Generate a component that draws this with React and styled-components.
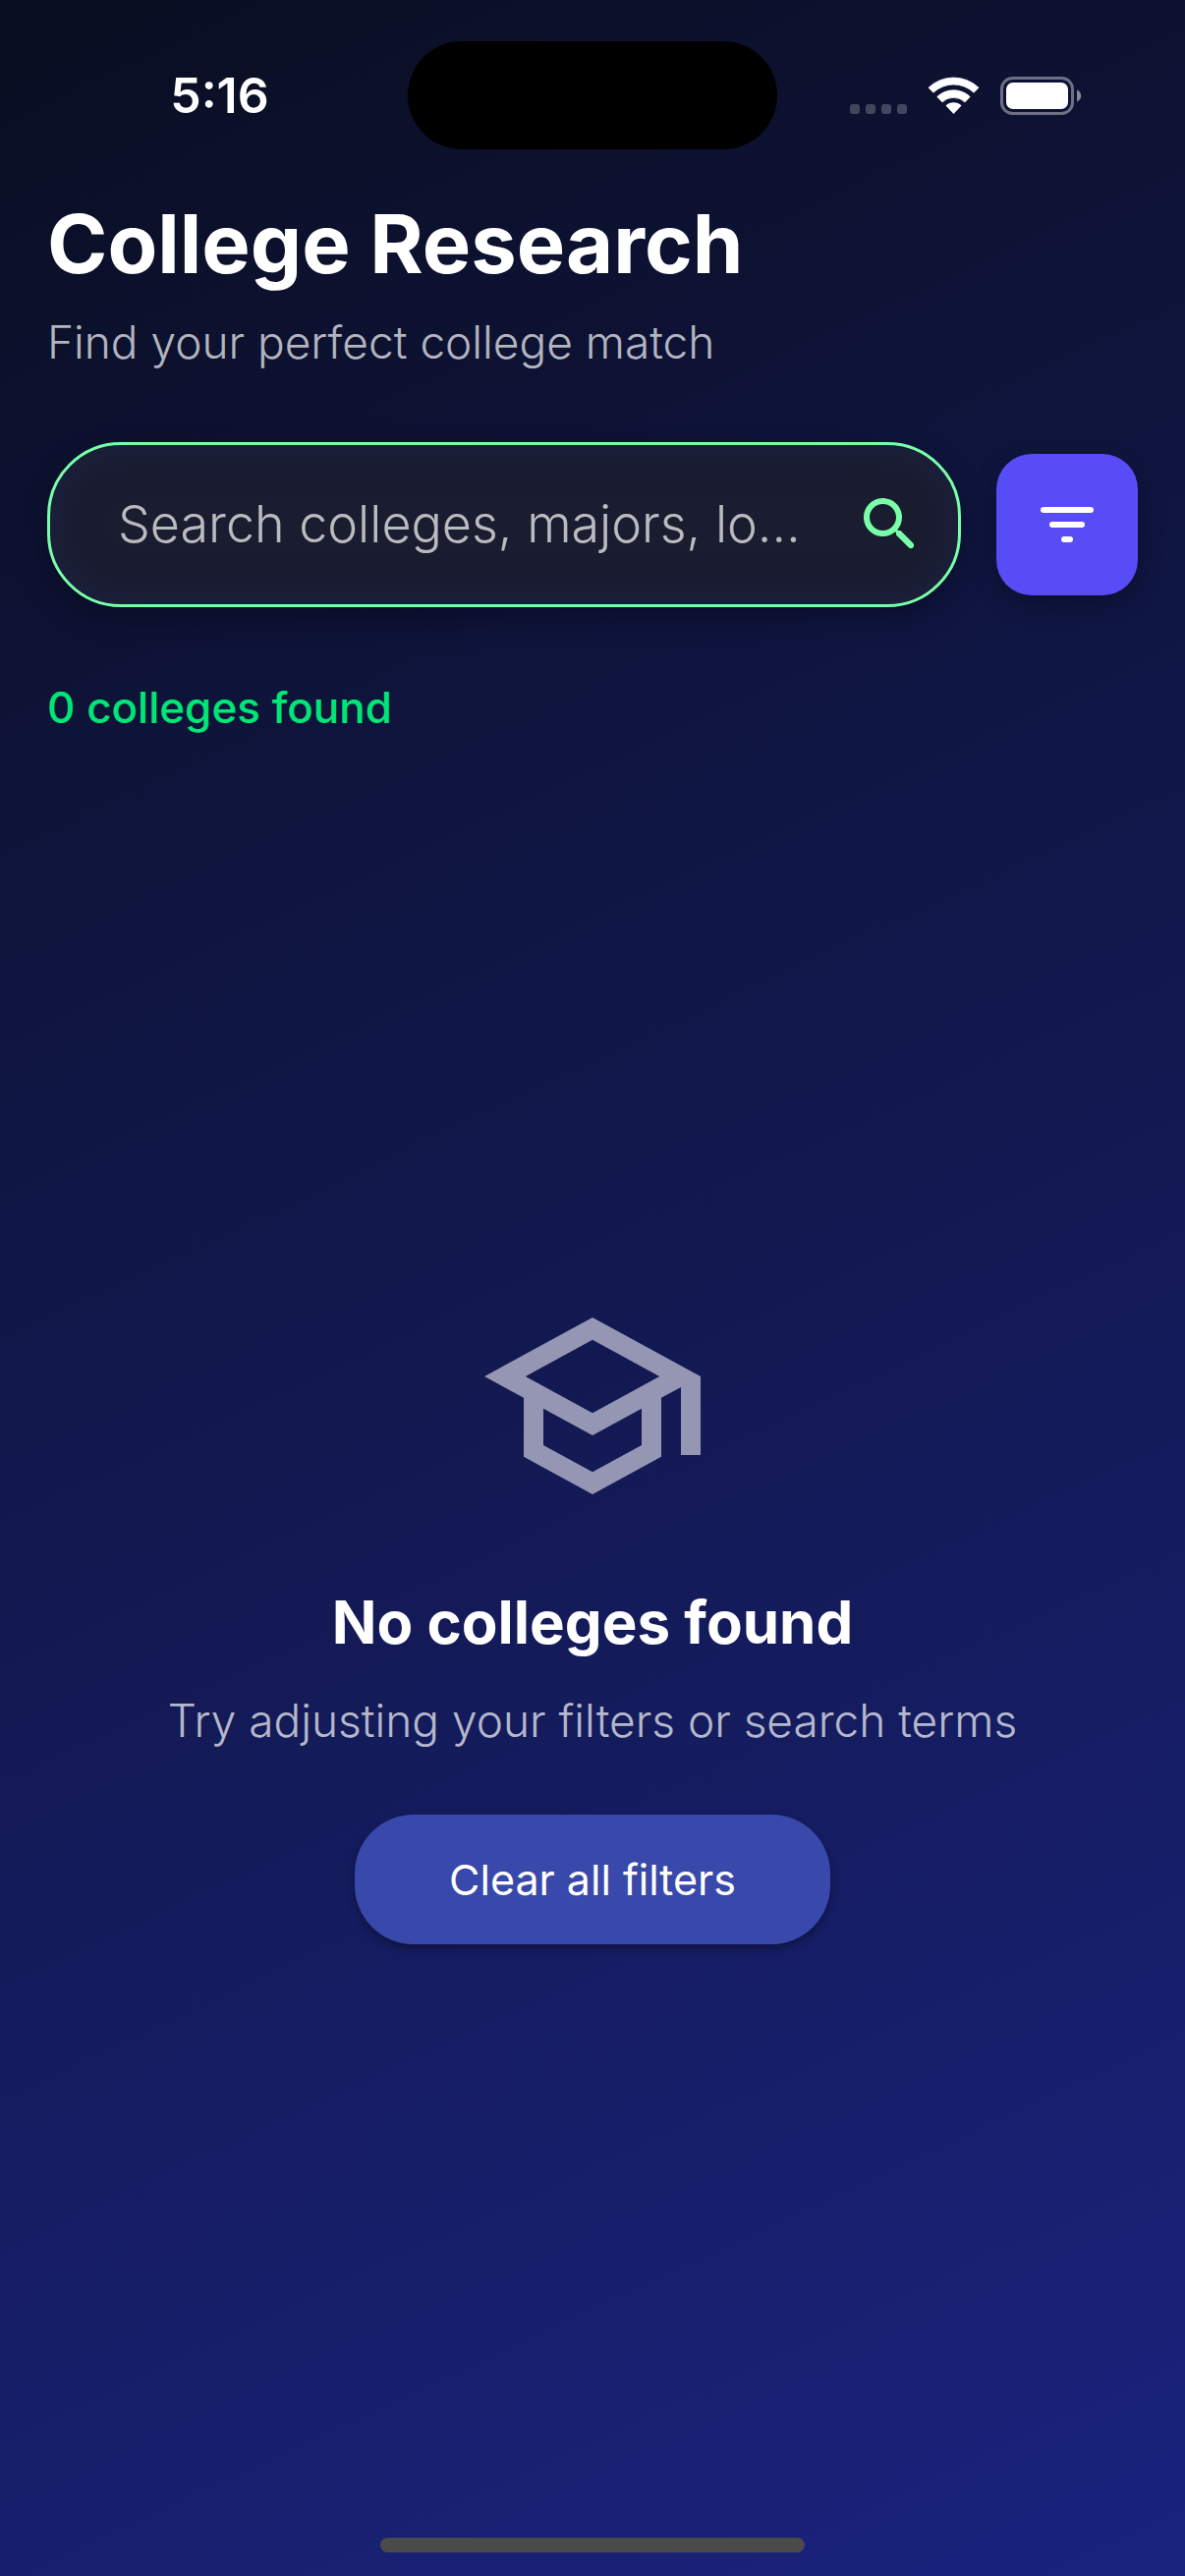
import React, { useState } from 'react';
import styled, { createGlobalStyle } from 'styled-components';
import { MdOutlineSchool } from 'react-icons/md';

const GlobalStyle = createGlobalStyle`
  *, *::before, *::after { box-sizing: border-box; }
  body {
    margin: 0;
    background: #0a0e21;
    color: #ffffff;
    font-family: Inter, "Liberation Sans", sans-serif;
  }
  h1, h2, p { margin: 0; }
  button, input { font: inherit; color: inherit; }
`;

const Screen = styled.div`
  display: flex;
  flex-direction: column;
  min-height: 100vh;
  background: linear-gradient(155deg, #0a0e21 0%, #1a237e 100%);
`;

const StatusBar = styled.header`
  display: grid;
  grid-template-columns: 1fr 376px 1fr;
  align-items: center;
  justify-items: center;
  padding: 42px 32px 34px;
`;

const Clock = styled.time`
  font-size: 50px;
  font-weight: 600;
  line-height: 60px;
`;

const Island = styled.div`
  width: 100%;
  height: 110px;
  border-radius: 55px;
  background: #000000;
`;

const StatusSvg = styled.svg`
  width: 236px;
  height: 38px;
  overflow: visible;
`;

const Content = styled.main`
  flex: 1;
  display: flex;
  flex-direction: column;
  padding: 10px 48px 0;
`;

const Title = styled.h1`
  font-size: 83px;
  font-weight: 700;
  line-height: 104px;
`;

const Caption = styled.p`
  font-size: 46px;
  font-weight: 300;
  line-height: 56px;
  color: rgba(255, 255, 255, 0.7);
`;

const Heading = styled.div`
  display: flex;
  flex-direction: column;
  gap: 20px;
`;

const SearchRow = styled.form`
  display: flex;
  align-items: center;
  gap: 36px;
  margin-top: 74px;
`;

const SearchBox = styled.label`
  flex: 1;
  min-width: 0;
  height: 168px;
  display: flex;
  align-items: center;
  gap: 28px;
  padding: 0 33px 0 69px;
  border: 3px solid #78ffa8;
  border-radius: 75px;
  background: #1a1c2f;
  box-shadow: 0 12px 30px rgba(0, 0, 0, 0.3), inset 0 0 45px rgba(30, 40, 86, 0.5);
`;

const SearchInput = styled.input`
  flex: 1;
  min-width: 0;
  padding: 0;
  border: 0;
  outline: 0;
  background: transparent;
  font-size: 52px;
  font-weight: 300;
  line-height: 64px;
  text-overflow: ellipsis;

  &::placeholder {
    color: rgba(255, 255, 255, 0.7);
    opacity: 1;
  }
`;

const Icon = styled.svg`
  flex: none;
  width: 72px;
  height: 72px;
  fill: ${(p) => p.$color};
`;

const FilterButton = styled.button`
  flex: none;
  width: 144px;
  height: 144px;
  display: grid;
  place-items: center;
  padding: 0;
  border: 0;
  border-radius: 36px;
  background: #584cf6;
  box-shadow: 0 9px 24px rgba(0, 0, 0, 0.3);
`;

const ResultCount = styled.p`
  margin-top: 74px;
  font-size: 44px;
  font-weight: 500;
  line-height: 56px;
  color: #00e676;
`;

const EmptyState = styled.section`
  flex: 1;
  display: flex;
  flex-direction: column;
  align-items: center;
  justify-content: center;
  text-align: center;
`;

const SchoolIcon = styled(MdOutlineSchool)`
  width: 240px;
  height: 240px;
  color: #9496b3;
`;

const EmptyTitle = styled.h2`
  margin: 64px 0 36px;
  font-size: 60px;
  font-weight: 700;
  line-height: 72px;
`;

const ClearButton = styled.button`
  margin-top: 68px;
  padding: 38px 96px;
  border: 0;
  border-radius: 60px;
  background: #3949ab;
  font-size: 43px;
  font-weight: 400;
  line-height: 56px;
  box-shadow: 0 4px 9px rgba(0, 0, 0, 0.35);
`;

const HomeArea = styled.footer`
  display: flex;
  align-items: flex-end;
  justify-content: center;
  height: 80px;
  padding-bottom: 24px;
`;

const HomeIndicator = styled.div`
  width: 432px;
  height: 15px;
  border-radius: 8px;
  background: #4b4b4b;
`;

function StatusIcons() {
  return (
    <StatusSvg viewBox="0 0 236 38" role="img" aria-label="Wi-Fi connected, battery full">
      <g fill="#ffffff" fillOpacity="0.22">
        {[0, 16, 32, 48].map((x) => (
          <rect key={x} x={x} y="28" width="10" height="10" rx="3" />
        ))}
      </g>
      <g fill="#ffffff">
        <path d="M80 11.2a37 37 0 0 1 51 0l-4.9 5a30 30 0 0 0-41.2 0z" stroke="#ffffff" strokeWidth="0.8" strokeLinejoin="round" />
        <path d="M88.8 20.4a24.3 24.3 0 0 1 33.4 0l-5.2 5.5a16.7 16.7 0 0 0-23 0z" stroke="#ffffff" strokeWidth="0.8" strokeLinejoin="round" />
        <path d="M97.5 29.5a11.7 11.7 0 0 1 16 0l-8 8.5z" />
      </g>
      <rect x="154.5" y="1.5" width="72" height="36" rx="11" fill="none" stroke="#ffffff" strokeOpacity="0.4" strokeWidth="3" />
      <rect x="159" y="6" width="63" height="27" rx="7" fill="#ffffff" />
      <path d="M231 13.5c2.6 1 4.2 3.3 4.2 6s-1.6 5-4.2 6z" fill="#ffffff" fillOpacity="0.5" />
    </StatusSvg>
  );
}

export default function App() {
  const [query, setQuery] = useState('');

  return (
    <>
      <GlobalStyle />
      <Screen>
        <StatusBar>
          <Clock>5:16</Clock>
          <Island />
          <StatusIcons />
        </StatusBar>

        <Content>
          <Heading>
            <Title>College Research</Title>
            <Caption>Find your perfect college match</Caption>
          </Heading>

          <SearchRow onSubmit={(e) => e.preventDefault()}>
            <SearchBox>
              <SearchInput
                type="text"
                aria-label="Search colleges"
                placeholder="Search colleges, majors, lo…"
                value={query}
                onChange={(e) => setQuery(e.target.value)}
              />
              <Icon viewBox="0 0 24 24" $color="#78ffa8" aria-hidden="true">
                <path d="M15.5 14h-.79l-.28-.27c1.2-1.4 1.82-3.31 1.48-5.34-.47-2.78-2.79-5-5.59-5.34-4.23-.52-7.79 3.04-7.27 7.27.34 2.8 2.56 5.12 5.34 5.59 2.03.34 3.94-.28 5.34-1.48l.27.28v.79l4.25 4.25c.41.41 1.08.41 1.49 0 .41-.41.41-1.08 0-1.49L15.5 14zm-6 0C7.01 14 5 11.99 5 9.5S7.01 5 9.5 5 14 7.01 14 9.5 11.99 14 9.5 14z" />
              </Icon>
            </SearchBox>
            <FilterButton type="button" aria-label="Filters">
              <Icon viewBox="0 0 24 24" $color="#ffffff" aria-hidden="true">
                <rect x="3" y="6" width="18" height="2" rx="1" />
                <rect x="6" y="11" width="12" height="2" rx="1" />
                <rect x="10" y="16" width="4" height="2" rx="1" />
              </Icon>
            </FilterButton>
          </SearchRow>

          <ResultCount>0 colleges found</ResultCount>

          <EmptyState>
            <SchoolIcon aria-hidden="true" />
            <EmptyTitle>No colleges found</EmptyTitle>
            <Caption>Try adjusting your filters or search terms</Caption>
            <ClearButton type="button" onClick={() => setQuery('')}>
              Clear all filters
            </ClearButton>
          </EmptyState>
        </Content>

        <HomeArea>
          <HomeIndicator />
        </HomeArea>
      </Screen>
    </>
  );
}
